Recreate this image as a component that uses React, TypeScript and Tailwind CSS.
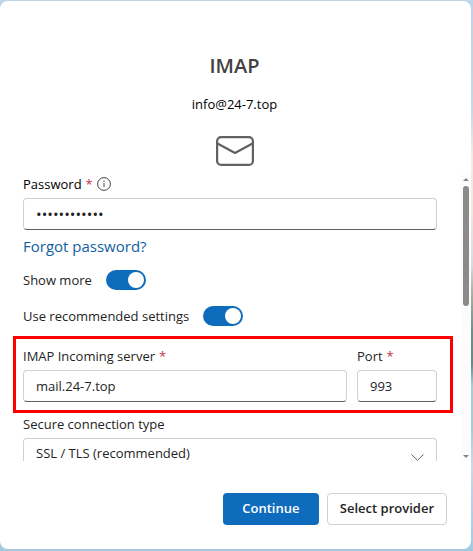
import { useState } from "react";
import type { ReactNode } from "react";

const controlClass =
  "block h-8 w-full rounded border border-[#d1d1d1] border-b-[#616161] bg-white px-3 text-[#242424] outline-none";

function Field({
  id,
  label,
  required,
  className,
  children,
}: {
  id: string;
  label: string;
  required?: boolean;
  className?: string;
  children: ReactNode;
}) {
  return (
    <div className={className}>
      <label htmlFor={id} className="block pb-1 text-[13px] leading-5 text-[#242424]">
        {label}
        {required && <span className="pl-1 text-[#c4314b]">*</span>}
      </label>
      {children}
    </div>
  );
}

function Toggle({ id, label }: { id: string; label: string }) {
  const [on, setOn] = useState(true);
  return (
    <div className="flex h-9 items-center gap-[14px]">
      <label htmlFor={id} className="text-[13px] leading-5 text-[#242424]">
        {label}
      </label>
      <input
        id={id}
        type="checkbox"
        role="switch"
        checked={on}
        onChange={(e) => setOn(e.target.checked)}
        className="flex h-5 w-10 appearance-none items-center justify-start rounded-full bg-[#8a8a8a] px-0.5 before:size-4 before:rounded-full before:bg-white checked:justify-end checked:bg-[#0f6cbd]"
      />
    </div>
  );
}

function Scrollbar() {
  return (
    <div aria-hidden="true" className="flex w-[10px] shrink-0 flex-col items-center justify-between bg-[#fcfcfc] pt-1 pb-[3px]">
      <div className="flex h-32 flex-col items-center gap-[5px]">
        <svg width="6" height="3" viewBox="0 0 6 3" fill="#858585">
          <path d="M3 0 6 3H0Z" />
        </svg>
        <div className="w-[6px] flex-1 rounded-full bg-[#8b8b8b]" />
      </div>
      <svg width="6" height="3" viewBox="0 0 6 3" fill="#858585">
        <path d="M0 0H6L3 3Z" />
      </svg>
    </div>
  );
}

export default function App() {
  return (
    <div className="h-screen bg-[linear-gradient(to_bottom,#bdd5e7_0%,#c3d8e8_20%,#f6ebe3_28%,#f3e6e0_38%,#d5dde2_48%,#a9b3a0_53%,#6f8f8c_60%,#6a8886_66%,#a9cad8_70%,#a9c9d6_78%,#cbd9ea_84%,#b9cfe4_92%,#a3cae2_100%)] pt-px pr-[2px] pb-[2px] font-['Open_Sans','Noto_Sans',sans-serif]">
      <form className="flex h-full flex-col rounded-lg bg-white" onSubmit={(e) => e.preventDefault()}>
        <header className="flex flex-col items-center pt-[51px] pr-[2px] pb-2">
          <h1 className="text-xl leading-7 font-semibold text-[#424242]">IMAP</h1>
          <p className="pt-[14px] text-[13px] leading-5 text-black">info@24-7.top</p>
          <svg className="mt-[22px]" width="38" height="30" viewBox="0 0 38 30" fill="none" stroke="#616161" strokeWidth="2.2">
            <rect x="1.1" y="1.1" width="35.8" height="27.8" rx="4" />
            <path d="M1.5 7.5 19 17 36.5 7.5" strokeLinejoin="round" />
          </svg>
        </header>

        <div className="flex min-h-0 flex-1">
          <div className="min-w-0 flex-1 overflow-hidden pr-6 pl-[23px]">
            <div className="flex items-center gap-1 pb-1">
              <label htmlFor="password" className="text-[13px] leading-5 text-black">
                Password<span className="pl-1 text-[#c4314b]">*</span>
              </label>
              <button type="button" aria-label="Password information" className="text-[#424242]">
                <svg width="14" height="14" viewBox="0 0 14 14" fill="none" stroke="currentColor">
                  <circle cx="7" cy="7" r="6.4" />
                  <path d="M7 6v4" />
                  <circle cx="7" cy="4.2" r=".7" fill="currentColor" stroke="none" />
                </svg>
              </button>
            </div>
            <input id="password" type="password" defaultValue="mailboxlogin" className={`${controlClass} text-[15px]`} />
            <div className="pt-1 pb-1">
              <a href="#forgot" className="block w-fit text-[15px] leading-6 text-[#115ea3]">
                Forgot password?
              </a>
            </div>
            <Toggle id="show-more" label="Show more" />
            <Toggle id="recommended" label="Use recommended settings" />

            <div className="-mr-4 -ml-[10px] mt-0.5 flex gap-[10px] border-3 border-[#ff0000] pt-[7px] pr-[13px] pb-2 pl-[7px]">
              <Field id="server" label="IMAP Incoming server" required className="min-w-0 flex-1">
                <input id="server" type="text" defaultValue="mail.24-7.top" className={`${controlClass} text-[13px]`} />
              </Field>
              <Field id="port" label="Port" required className="w-20">
                <input id="port" type="text" inputMode="numeric" defaultValue="993" className={`${controlClass} text-[13px]`} />
              </Field>
            </div>

            <Field id="security" label="Secure connection type" className="pt-px">
              <div className="relative">
                <select id="security" defaultValue="ssl" className={`${controlClass} appearance-none text-[13px]`}>
                  <option value="ssl">SSL / TLS (recommended)</option>
                  <option value="starttls">StartTLS</option>
                  <option value="none">None</option>
                </select>
                <svg className="pointer-events-none absolute top-4 right-[13px]" width="13" height="7" viewBox="0 0 13 7" fill="none" stroke="#616161">
                  <path d="M.5.5 6.5 6.3 12.5.5" />
                </svg>
              </div>
            </Field>
          </div>
          <Scrollbar />
        </div>

        <footer className="flex justify-end gap-2 pt-8 pr-6 pb-6">
          <button type="submit" className="h-8 min-w-24 rounded bg-[#0f6cbd] px-3 text-[13px] font-semibold text-white">
            Continue
          </button>
          <button type="button" className="h-8 rounded border border-[#d1d1d1] bg-white px-3 text-[13px] font-semibold text-[#242424]">
            Select provider
          </button>
        </footer>
      </form>
    </div>
  );
}
